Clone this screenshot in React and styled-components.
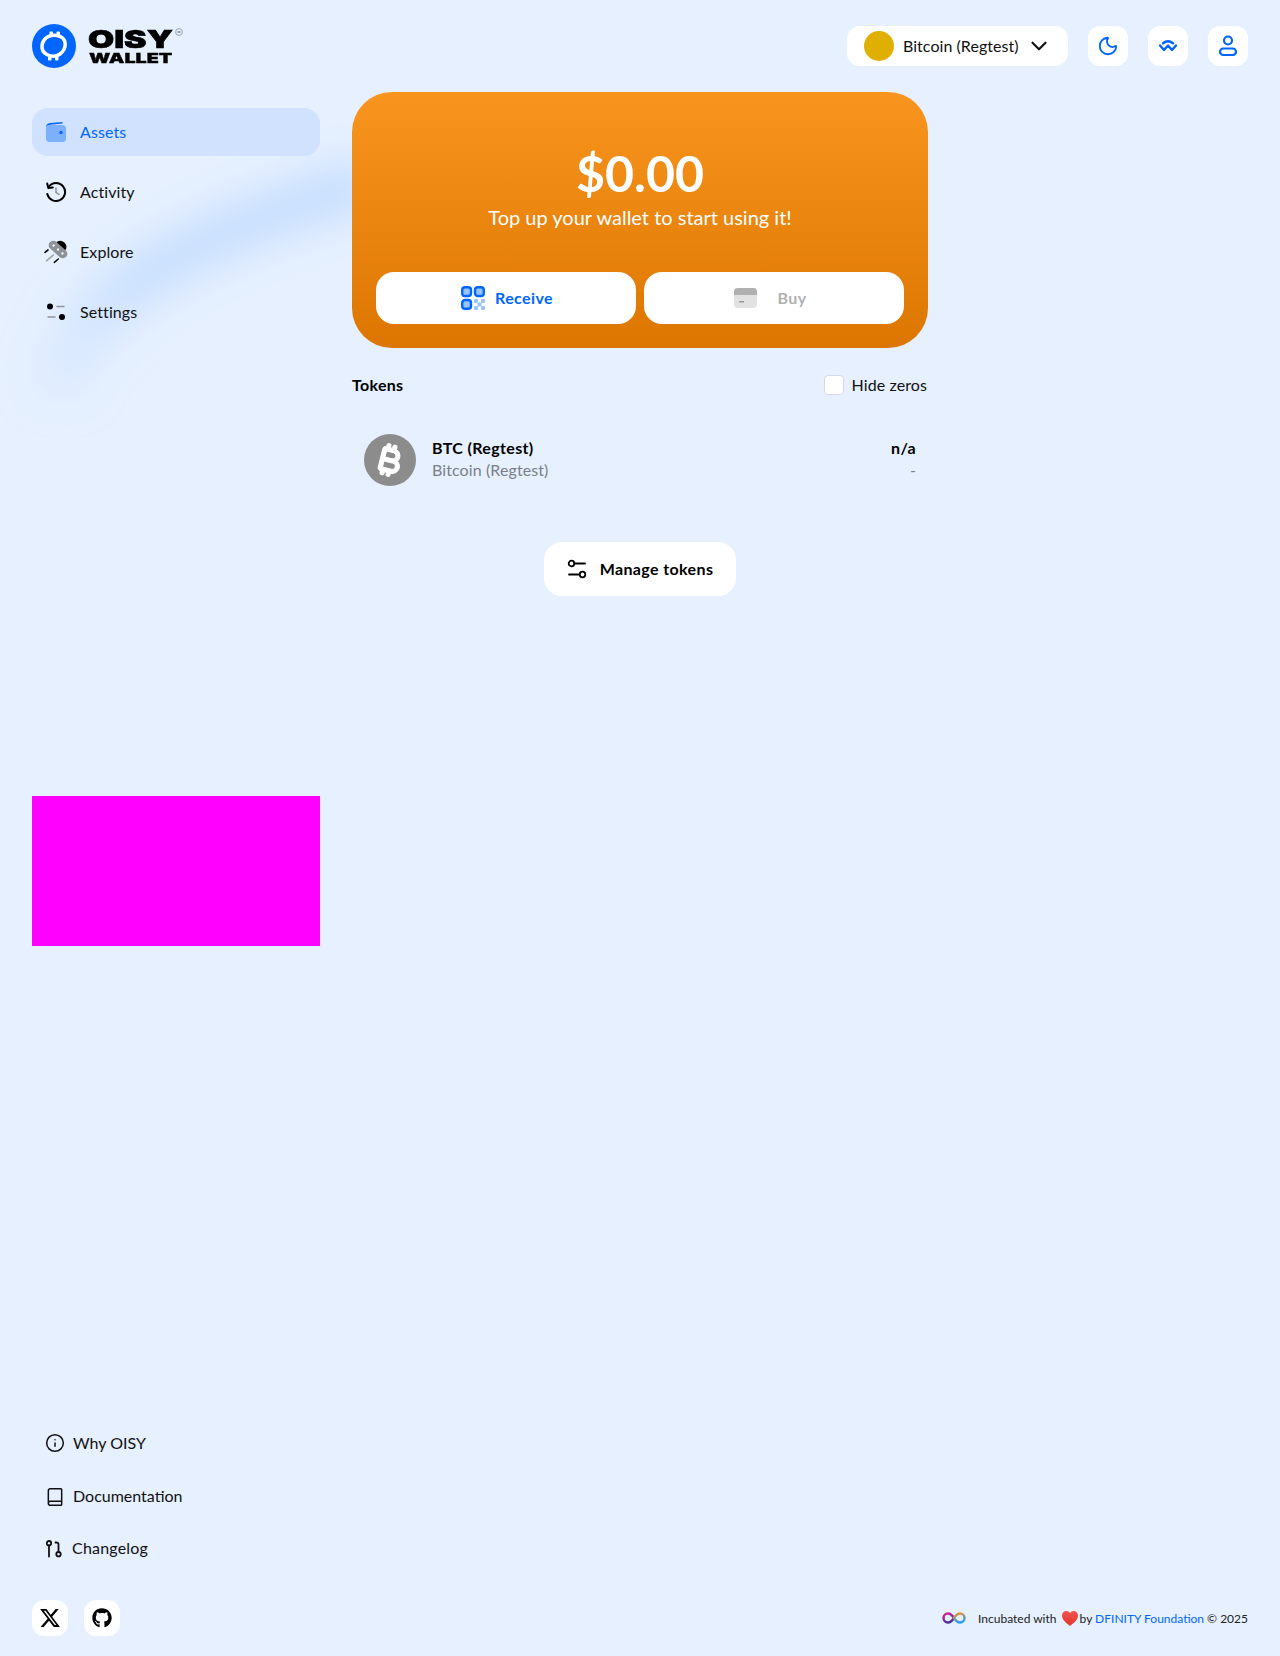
import React from 'react';
import styled, { createGlobalStyle } from 'styled-components';
import { Moon, ChevronDown, Info, Book } from 'lucide-react';
import { FaXTwitter, FaGithub, FaBitcoinSign } from 'react-icons/fa6';

const Global = createGlobalStyle`
  html, body { margin: 0; padding: 0; background: #e6f0ff; }
  body { font-family: "Lato", "Liberation Sans", sans-serif; color: #0a0a0a; }
  * { box-sizing: border-box; }
`;

const Page = styled.div`
  position: relative;
  height: 1656px;
  width: 1280px;
  overflow: hidden;
  background: #e6f0ff;
  display: flex;
  flex-direction: column;
`;

const Backdrop = styled.svg`
  position: absolute;
  left: 0;
  top: 0;
  width: 1280px;
  height: 700px;
  pointer-events: none;
`;

const Header = styled.header`
  position: relative;
  display: flex;
  align-items: flex-start;
  justify-content: space-between;
  padding: 24px 32px 0;
  height: 92px;
`;

const Brand = styled.div`
  display: flex;
  align-items: flex-start;
  gap: 12px;
`;

const Wordmark = styled.div`
  position: relative;
  width: 85px;
  height: 44px;
  color: #000;
  font-family: "Inter", "Liberation Sans", sans-serif;
  font-weight: 900;
`;

const WordLine = styled.span`
  position: absolute;
  left: ${p => p.$left}px;
  top: ${p => p.$top}px;
  font-size: ${p => p.$size}px;
  line-height: 0.8;
  white-space: nowrap;
  transform-origin: left top;
  transform: scaleX(${p => p.$sx});
  -webkit-text-stroke: ${p => p.$stroke}px #000;
`;

const Registered = styled.svg`
  position: absolute;
  left: 87px;
  top: 4px;
`;

const HeaderActions = styled.div`
  display: flex;
  align-items: center;
  gap: 20px;
  margin-top: 2px;
`;

const NetworkPill = styled.div`
  width: 221px;
  height: 40px;
  background: #fff;
  border-radius: 13px;
  display: flex;
  align-items: center;
  padding: 0 16px 0 17px;
  font-size: 16px;
  letter-spacing: 0.05px;
  color: #111;
`;

const NetworkDot = styled.span`
  width: 30px;
  height: 30px;
  border-radius: 50%;
  background: #e0b000;
  margin-right: 9px;
`;

const NetworkName = styled.span`
  flex: 1;
  margin-bottom: 2px;
`;

const IconButton = styled.div`
  width: ${p => p.$size || 40}px;
  height: ${p => p.$size || 40}px;
  border-radius: 12px;
  background: #fff;
  color: ${p => p.$color || '#0066ff'};
  display: flex;
  align-items: center;
  justify-content: center;
`;

const Columns = styled.div`
  position: relative;
  flex: 1;
  display: grid;
  grid-template-columns: 288px 576px;
  column-gap: 32px;
  padding: 0 32px;
  min-height: 0;
`;

const Sidebar = styled.aside`
  display: flex;
  flex-direction: column;
  padding-top: 16px;
`;

const NavList = styled.nav`
  display: flex;
  flex-direction: column;
  gap: 12px;
`;

const NavItem = styled.div`
  height: 48px;
  display: flex;
  align-items: center;
  padding-left: 14px;
  gap: 14px;
  border-radius: 16px;
  font-size: 16px;
  letter-spacing: 0.1px;
  background: ${p => (p.$active ? '#d0e2ff' : 'transparent')};
  color: ${p => (p.$active ? '#0066ff' : '#111')};
`;

const NavGlyph = styled.span`
  width: 20px;
  height: 24px;
  display: flex;
  align-items: center;
  justify-content: center;
  flex-shrink: 0;
  svg { flex-shrink: 0; }
`;

const Label = styled.span`
  margin-bottom: 2px;
`;

const AdSlot = styled.div`
  width: 288px;
  height: 150px;
  background: #ff00ff;
  margin-top: 460px;
`;

const LinkList = styled.div`
  display: flex;
  flex-direction: column;
  margin-top: auto;
  padding-bottom: 26px;
`;

const SideLink = styled.div`
  height: ${p => p.$h}px;
  display: flex;
  align-items: center;
  gap: ${p => p.$gap}px;
  padding-left: 13px;
  font-size: 16px;
  letter-spacing: ${p => p.$track || 0}px;
  color: #111;
`;

const Main = styled.main`
  display: flex;
  flex-direction: column;
`;

const BalanceCard = styled.section`
  height: 256px;
  border-radius: 40px;
  background: linear-gradient(180deg, #f9951e 0%, #dc7600 100%);
  color: #fff;
  padding: 0 24px 24px;
  display: flex;
  flex-direction: column;
  align-items: center;
`;

const Amount = styled.div`
  margin-top: 53px;
  font-size: 50px;
  line-height: 56px;
  font-weight: 700;
`;

const Tagline = styled.div`
  margin-top: 2px;
  font-size: 20px;
  line-height: 28px;
`;

const CardActions = styled.div`
  margin-top: auto;
  align-self: stretch;
  display: grid;
  grid-template-columns: 1fr 1fr;
  gap: 8px;
`;

const ActionButton = styled.div`
  height: 52px;
  border-radius: 18px;
  background: #fff;
  display: flex;
  align-items: center;
  justify-content: center;
  gap: ${p => p.$gap}px;
  padding-right: ${p => p.$shift || 0}px;
  padding-left: ${p => p.$pushRight || 0}px;
  font-size: 16px;
  font-weight: 700;
  letter-spacing: 0.4px;
  color: ${p => p.$color};
`;

const TokensHead = styled.div`
  display: flex;
  align-items: center;
  justify-content: space-between;
  margin-top: 27px;
  height: 20px;
`;

const TokensTitle = styled.div`
  font-size: 16px;
  font-weight: 700;
  letter-spacing: 0.3px;
  color: #000;
  margin-bottom: 2px;
`;

const HideToggle = styled.label`
  display: flex;
  align-items: center;
  gap: 8px;
  font-size: 16px;
  letter-spacing: 0.1px;
  color: #111;
  padding-right: 1px;
`;

const Checkbox = styled.span`
  width: 20px;
  height: 20px;
  border-radius: 4px;
  background: #fff;
  border: 1px solid #d6dbe4;
`;

const TokenRow = styled.div`
  margin-top: 39px;
  display: flex;
  align-items: center;
  padding: 0 12px;
  gap: 16px;
`;

const TokenIcon = styled.div`
  width: 52px;
  height: 52px;
  border-radius: 50%;
  background: #8c8c8c;
  color: #fff;
  display: flex;
  align-items: center;
  justify-content: center;
  font-size: 33px;
  svg { transform: rotate(14deg); stroke: #fff; stroke-width: 14px; }
`;

const TokenText = styled.div`
  flex: 1;
  display: flex;
  flex-direction: column;
  gap: 2px;
  margin-bottom: 2px;
`;

const TokenValue = styled.div`
  display: flex;
  flex-direction: column;
  align-items: flex-end;
  gap: 2px;
  margin-bottom: 2px;
`;

const Primary = styled.div`
  font-size: 16px;
  line-height: 20px;
  font-weight: 700;
  letter-spacing: 0.35px;
  color: #000;
`;

const Secondary = styled.div`
  font-size: 16px;
  line-height: 20px;
  letter-spacing: 0.1px;
  color: #7b8088;
`;

const ManageButton = styled.div`
  align-self: center;
  margin-top: 56px;
  width: 192px;
  height: 54px;
  border-radius: 18px;
  background: #fff;
  display: flex;
  align-items: center;
  justify-content: center;
  gap: 13px;
  font-size: 16px;
  font-weight: 700;
  letter-spacing: 0.38px;
  color: #000;
`;

const Footer = styled.footer`
  position: relative;
  display: flex;
  align-items: center;
  justify-content: space-between;
  padding: 0 32px;
  height: 36px;
  margin-bottom: 20px;
`;

const Socials = styled.div`
  display: flex;
  gap: 16px;
`;

const Credit = styled.div`
  display: flex;
  align-items: center;
  font-size: 12px;
  color: #222;
  white-space: pre;
`;

const CreditLink = styled.span`
  color: #0066ff;
`;

const LogoMark = () => (
  <svg width="44" height="44" viewBox="0 0 44 44">
    <circle cx="22" cy="22" r="22" fill="#0066ff" />
    <g fill="#fff">
      <rect x="17.500" y="7.500" width="3.500" height="5" rx="1" />
      <rect x="24.500" y="7.500" width="3.500" height="5" rx="1" />
      <rect x="16" y="31.500" width="3.500" height="5" rx="1" />
      <rect x="23" y="31.500" width="3.500" height="5" rx="1" />
    </g>
    <path d="M12.500 15.500c3.500-4 8-4.500 12-4 5 .6 8.500 3.600 8.700 8.200.2 3.800-1.500 7.500-5.200 10.300-3.800 2.700-9 2.700-13.200.5-3.600-2-5-5.300-4.800-8.500.1-2.400.8-4.500 2.500-6.500z" fill="none" stroke="#fff" strokeWidth="3.500" />
  </svg>
);

const WalletIcon = () => (
  <svg width="20" height="20" viewBox="0 0 20 20">
    <path d="M0 5C0 2.500 1.500 1.200 4 .9L16.500.1v1.400L4.500 2.800C2 3 1 3.800 0 5z" fill="#0066ff" />
    <rect x="0" y="3" width="20" height="17" rx="3.500" fill="#7dafff" />
    <circle cx="15" cy="10.500" r="1.700" fill="#0066ff" />
  </svg>
);

const ActivityIcon = () => (
  <svg width="22" height="22" viewBox="0 0 22 22" fill="none" strokeLinecap="round" strokeLinejoin="round">
    <path d="M4 5.500A9 9 0 1 1 2.300 13" stroke="#000" strokeWidth="2" />
    <path d="M2.200 2.500 3.300 7l4.500-.6" stroke="#000" strokeWidth="2" />
    <path d="M11 7v4.600l3 1.700" stroke="#8f9499" strokeWidth="1.500" />
  </svg>
);

const ExploreIcon = () => (
  <svg width="24" height="24" viewBox="0 0 24 24" strokeLinecap="round">
    <g transform="rotate(42 14 9.500)">
      <path d="M8 5.500a6 5.500 0 0 1 12 0z" fill="#000" />
      <rect x="3" y="5" width="22" height="9" rx="4.500" fill="#8d9299" />
      <circle cx="8" cy="9.500" r="1.200" fill="#fff" />
      <circle cx="14" cy="9.500" r="1.200" fill="#fff" />
      <circle cx="20" cy="9.500" r="1.200" fill="#fff" />
    </g>
    <path d="M1 12.300 4 10" stroke="#000" strokeWidth="1.600" />
    <path d="M2.700 20.700 9.300 15" stroke="#9aa0a6" strokeWidth="1.600" />
    <path d="M10.300 22.300l4-3.300" stroke="#000" strokeWidth="1.600" />
  </svg>
);

const SettingsIcon = () => (
  <svg width="20" height="20" viewBox="0 0 20 20" strokeLinecap="round">
    <circle cx="4" cy="4.500" r="3" fill="#000" />
    <circle cx="16" cy="15" r="3" fill="#000" />
    <path d="M11 4.500h7" stroke="#8f9499" strokeWidth="1.500" />
    <path d="M2 15h7" stroke="#8f9499" strokeWidth="1.500" />
  </svg>
);

const WalletConnectIcon = () => (
  <svg width="20" height="12" viewBox="0 0 20 12" fill="none" stroke="#0066ff" strokeWidth="2.400" strokeLinecap="round" strokeLinejoin="round">
    <path d="M5 3.300c3-2.400 7-2.400 10 0" />
    <path d="M2 5.500 6 10l4-4.500 4 4.500 4-4.500" />
  </svg>
);

const UserIcon = () => (
  <svg width="20" height="22" viewBox="0 0 20 22" fill="none" stroke="#0066ff" strokeWidth="2.200">
    <circle cx="10" cy="5.500" r="4" />
    <rect x="2" y="13.500" width="16" height="6.500" rx="3.250" />
  </svg>
);

const QrIcon = () => (
  <svg width="24" height="24" viewBox="0 0 24 24">
    <g fill="#99c2ff" stroke="#0066ff" strokeWidth="2.400">
      <rect x="1.200" y="1.200" width="8.800" height="8.800" rx="2.800" />
      <rect x="14" y="1.200" width="8.800" height="8.800" rx="2.800" />
      <rect x="1.200" y="14" width="8.800" height="8.800" rx="2.800" />
    </g>
    <g fill="#99c2ff">
      <rect x="13" y="13" width="4" height="4" rx="1" />
      <rect x="20" y="13" width="4" height="4" rx="1" />
      <rect x="16.500" y="16.500" width="4" height="4" rx="1" />
      <rect x="13" y="20" width="4" height="4" rx="1" />
      <rect x="20" y="20" width="4" height="4" rx="1" />
    </g>
  </svg>
);

const CardIcon = () => (
  <svg width="23" height="20" viewBox="0 0 23 20">
    <rect width="23" height="20" rx="4" fill="#e2e2e2" />
    <path d="M0 7V4a4 4 0 0 1 4-4h15a4 4 0 0 1 4 4v3z" fill="#b0b0b0" />
    <rect x="5" y="13" width="5" height="1.500" fill="#9a9a9a" />
  </svg>
);

const ManageIcon = () => (
  <svg width="20" height="20" viewBox="0 0 20 20" fill="none" stroke="#000" strokeWidth="1.800" strokeLinecap="round">
    <circle cx="4.500" cy="4.500" r="2.800" />
    <path d="M7.500 4.500H18" />
    <circle cx="15.500" cy="15.500" r="2.800" />
    <path d="M2 15.500h10.500" />
  </svg>
);

const BranchIcon = () => (
  <svg width="18" height="18" viewBox="0 0 18 18" fill="none" stroke="#111" strokeWidth="1.800" strokeLinecap="round" strokeLinejoin="round">
    <circle cx="4" cy="3.200" r="2.200" />
    <path d="M4 5.500V16.500" />
    <circle cx="13.500" cy="14.200" r="2.200" />
    <path d="M13.500 12V4.500c0-1.400-.8-2-2-2h-1" />
  </svg>
);

const InfinityIcon = () => (
  <svg width="24" height="12" viewBox="0 0 24 12" fill="none" strokeWidth="2.400" style={{ marginRight: 12, marginLeft: 1 }}>
    <defs>
      <linearGradient id="infL" x1="0" y1="0" x2="0.3" y2="1">
        <stop offset="0" stopColor="#e0218a" />
        <stop offset="1" stopColor="#4b2ea0" />
      </linearGradient>
      <linearGradient id="infR" x1="0" y1="0" x2="0.3" y2="1">
        <stop offset="0" stopColor="#f7931e" />
        <stop offset="1" stopColor="#2a9df0" />
      </linearGradient>
    </defs>
    <path d="M12 6C10 3 8.500 1.500 6 1.500a4.500 4.500 0 0 0 0 9c2.500 0 4-1.500 6-4.500z" stroke="url(#infL)" />
    <path d="M12 6c2-3 3.500-4.500 6-4.500a4.500 4.500 0 0 1 0 9c-2.500 0-4-1.500-6-4.500z" stroke="url(#infR)" />
  </svg>
);

const HeartIcon = () => (
  <svg width="16" height="15" viewBox="0 0 16 15" style={{ margin: '0 2px 0 2px' }}>
    <defs>
      <linearGradient id="heart" x1="0" y1="0" x2="0" y2="1">
        <stop offset="0" stopColor="#f0524d" />
        <stop offset="1" stopColor="#e8372f" />
      </linearGradient>
    </defs>
    <path d="M8 15C3 11 0 8.500 0 4.800 0 2 2 0 4.400 0 6 0 7.300.8 8 2.200 8.700.8 10 0 11.600 0 14 0 16 2 16 4.800 16 8.500 13 11 8 15z" fill="url(#heart)" />
  </svg>
);

export default function App() {
  return (
    <Page>
      <Global />
      <Backdrop viewBox="0 0 1280 700">
        <defs>
          <filter id="swooshBlur" x="-30%" y="-30%" width="160%" height="160%">
            <feGaussianBlur stdDeviation="20" />
          </filter>
          <linearGradient id="swooshFade" gradientUnits="userSpaceOnUse" x1="60" y1="380" x2="360" y2="185">
            <stop offset="0" stopColor="#c6defe" stopOpacity="0.3" />
            <stop offset="0.35" stopColor="#c6defe" stopOpacity="0.95" />
            <stop offset="1" stopColor="#c6defe" stopOpacity="1" />
          </linearGradient>
        </defs>
        <path
          d="M55 395C70 315 150 245 370 182"
          fill="none"
          stroke="url(#swooshFade)"
          strokeWidth="50"
          filter="url(#swooshBlur)"
        />
      </Backdrop>
      <Header>
        <Brand>
          <LogoMark />
          <Wordmark>
            <WordLine $left={0} $top={6} $size={24} $sx={1.41} $stroke={0.6}>OISY</WordLine>
            <WordLine $left={1} $top={29} $size={13} $sx={1.52} $stroke={0.3}>WALLET</WordLine>
            <Registered width="8" height="8" viewBox="0 0 8 8">
              <circle cx="4" cy="4" r="3.400" fill="none" stroke="#8a8f96" strokeWidth="0.800" />
              <path d="M2.500 4h3" stroke="#555" strokeWidth="1" />
            </Registered>
          </Wordmark>
        </Brand>
        <HeaderActions>
          <NetworkPill>
            <NetworkDot />
            <NetworkName>Bitcoin (Regtest)</NetworkName>
            <ChevronDown size={26} strokeWidth={2} color="#111" />
          </NetworkPill>
          <IconButton><Moon size={22} strokeWidth={2} /></IconButton>
          <IconButton><WalletConnectIcon /></IconButton>
          <IconButton><UserIcon /></IconButton>
        </HeaderActions>
      </Header>
      <Columns>
        <Sidebar>
          <NavList>
            <NavItem $active><NavGlyph><WalletIcon /></NavGlyph><Label>Assets</Label></NavItem>
            <NavItem><NavGlyph><ActivityIcon /></NavGlyph><Label>Activity</Label></NavItem>
            <NavItem><NavGlyph><ExploreIcon /></NavGlyph><Label>Explore</Label></NavItem>
            <NavItem><NavGlyph><SettingsIcon /></NavGlyph><Label>Settings</Label></NavItem>
          </NavList>
          <AdSlot />
          <LinkList>
            <SideLink $h={54} $gap={8}><Info size={20} strokeWidth={1.8} /><Label>Why OISY</Label></SideLink>
            <SideLink $h={53} $gap={8}><Book size={20} strokeWidth={1.8} /><Label>Documentation</Label></SideLink>
            <SideLink $h={51} $gap={9} $track={0.2}><BranchIcon /><Label>Changelog</Label></SideLink>
          </LinkList>
        </Sidebar>
        <Main>
          <BalanceCard>
            <Amount>$0.00</Amount>
            <Tagline>Top up your wallet to start using it!</Tagline>
            <CardActions>
              <ActionButton $gap={10} $pushRight={2} $color="#0066ff"><QrIcon /><Label>Receive</Label></ActionButton>
              <ActionButton $gap={20} $shift={7} $color="#b0b0b0"><CardIcon /><Label>Buy</Label></ActionButton>
            </CardActions>
          </BalanceCard>
          <TokensHead>
            <TokensTitle>Tokens</TokensTitle>
            <HideToggle><Checkbox /><Label>Hide zeros</Label></HideToggle>
          </TokensHead>
          <TokenRow>
            <TokenIcon><FaBitcoinSign /></TokenIcon>
            <TokenText>
              <Primary>BTC (Regtest)</Primary>
              <Secondary>Bitcoin (Regtest)</Secondary>
            </TokenText>
            <TokenValue>
              <Primary>n/a</Primary>
              <Secondary>-</Secondary>
            </TokenValue>
          </TokenRow>
          <ManageButton><ManageIcon /><Label>Manage tokens</Label></ManageButton>
        </Main>
      </Columns>
      <Footer>
        <Socials>
          <IconButton $size={36} $color="#000"><FaXTwitter size={22} /></IconButton>
          <IconButton $size={36} $color="#000"><FaGithub size={20} /></IconButton>
        </Socials>
        <Credit>
          <InfinityIcon />Incubated with <HeartIcon />by <CreditLink>DFINITY Foundation</CreditLink> © 2025
        </Credit>
      </Footer>
    </Page>
  );
}
